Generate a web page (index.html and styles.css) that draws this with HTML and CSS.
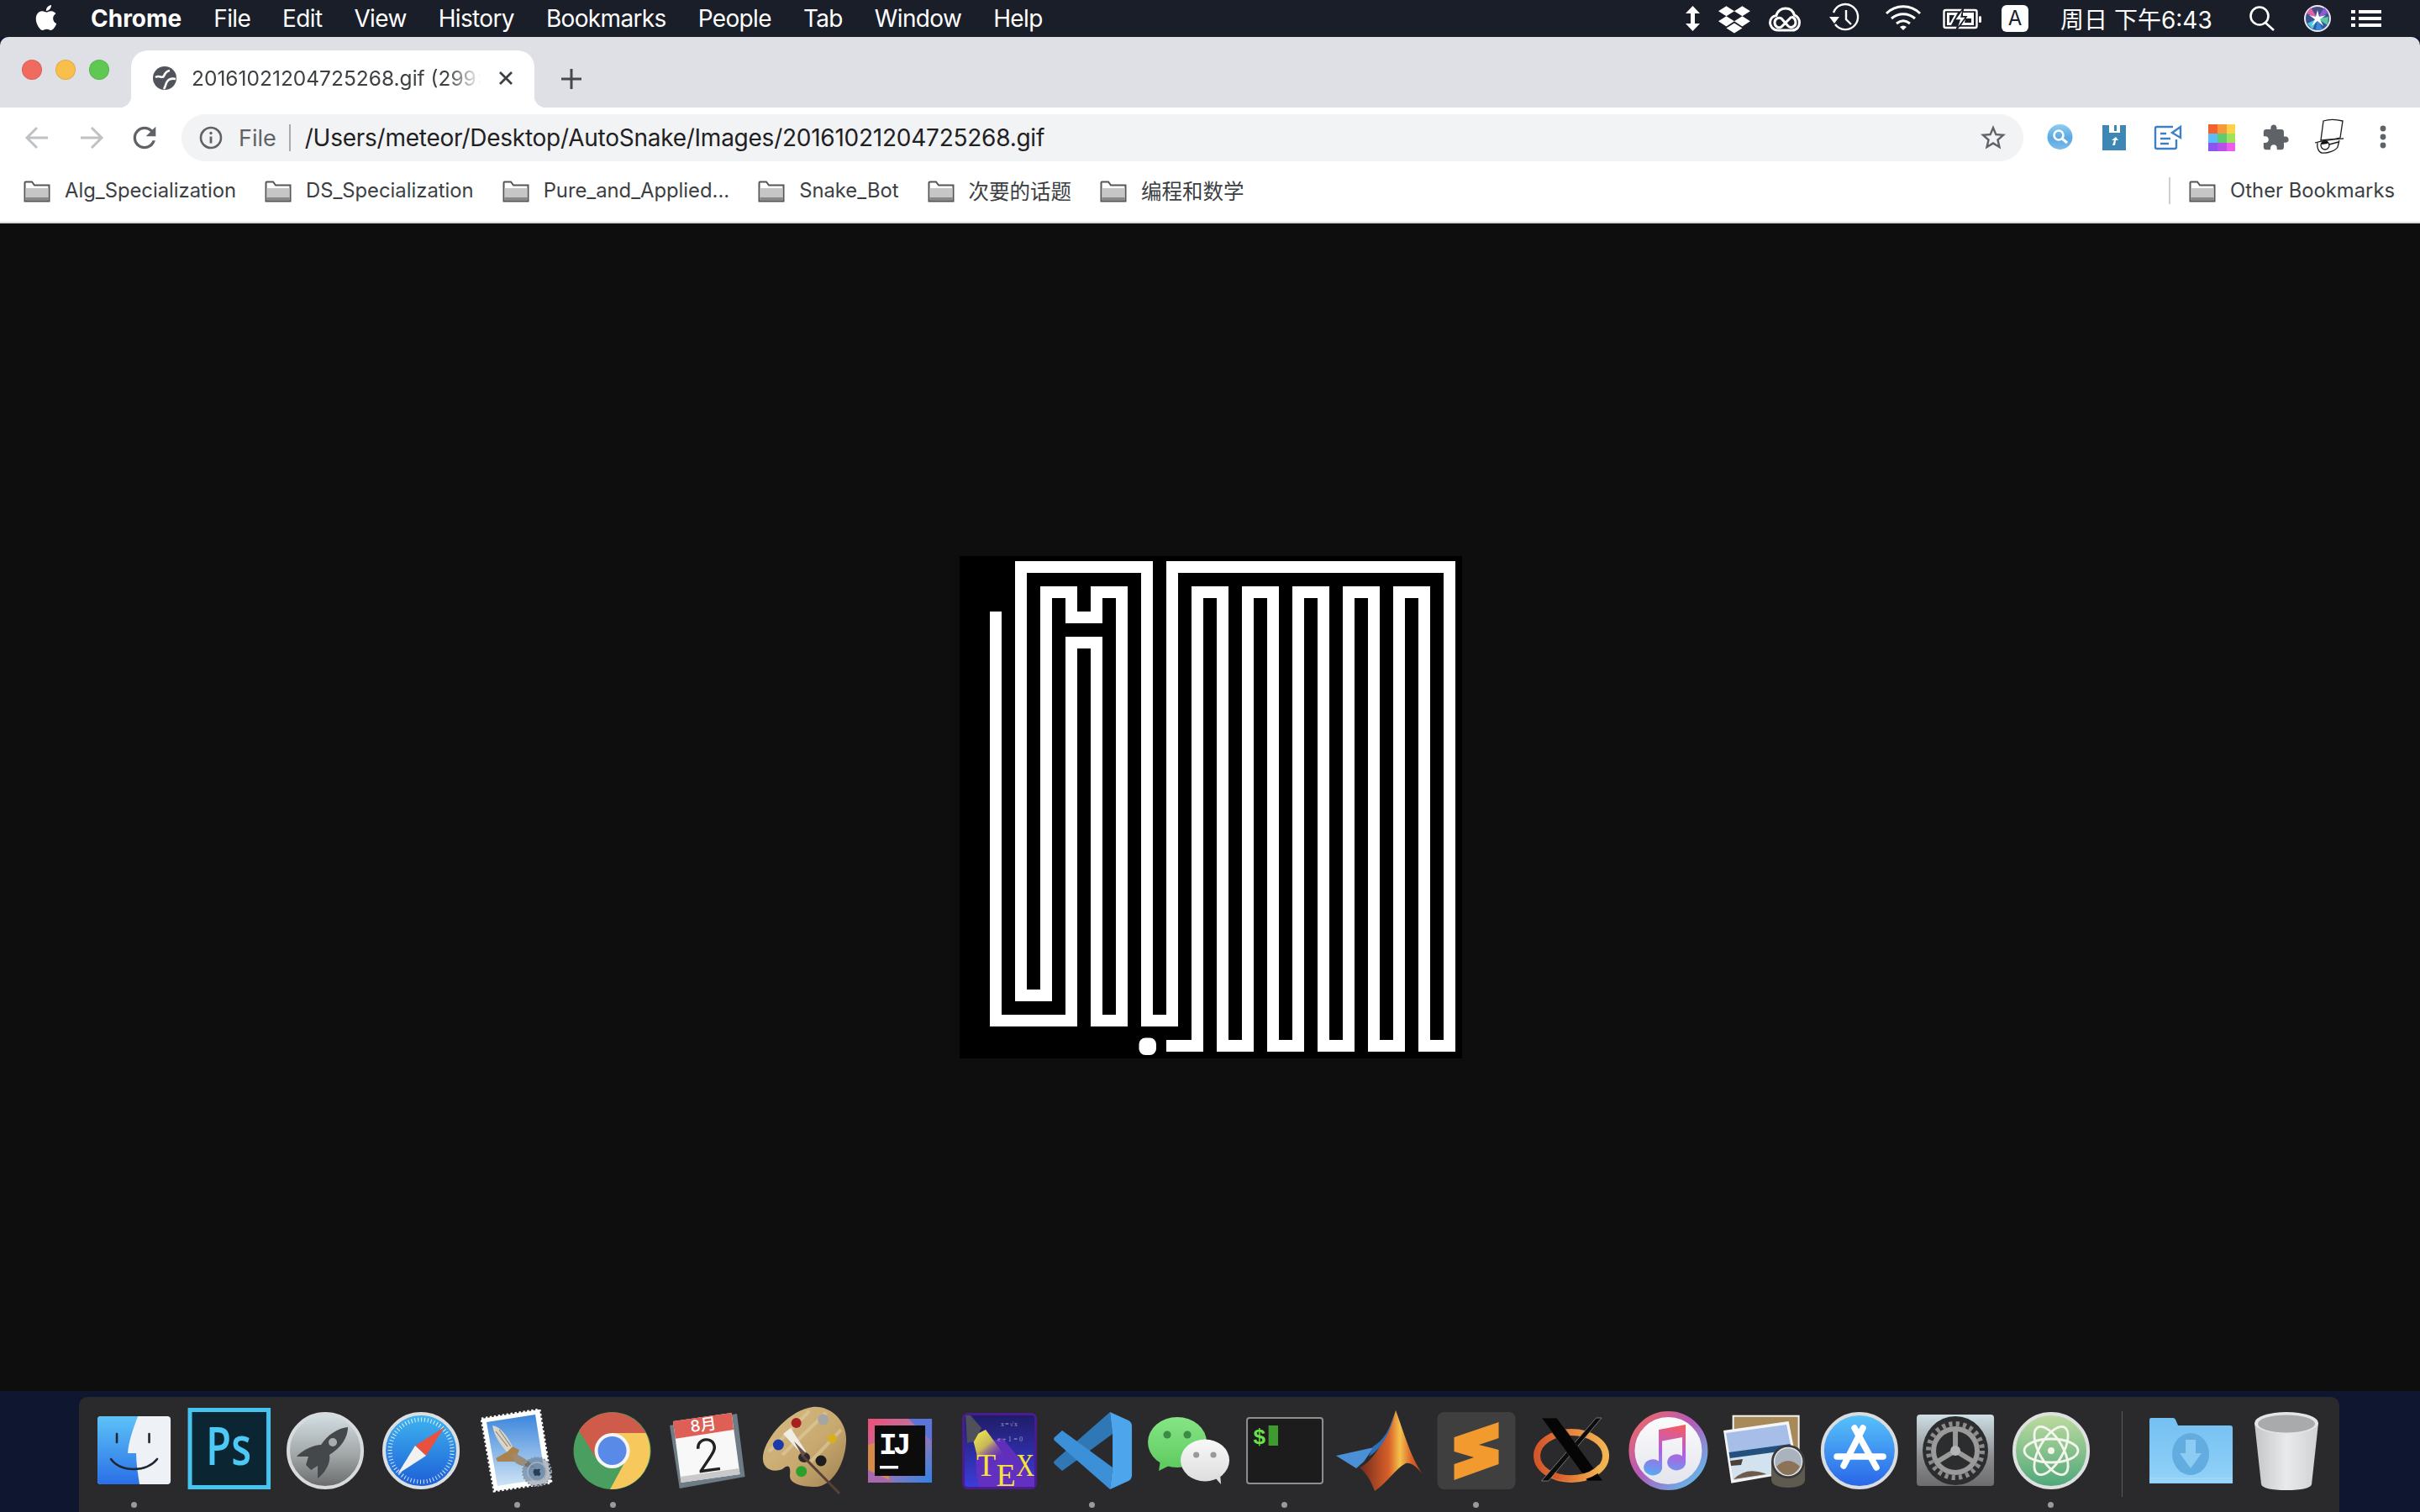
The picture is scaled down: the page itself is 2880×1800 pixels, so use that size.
FILE: index.html
```html
<!DOCTYPE html>
<html lang="en">
<head>
<meta charset="utf-8">
<title>20161021204725268.gif</title>
<link rel="stylesheet" href="styles.css">
</head>
<body>
<header class="menubar">
  <svg class="apple" width="30" height="32" viewBox="0 0 24 24"><path fill="#fff" d="M12.152 6.896c-.948 0-2.415-1.078-3.96-1.04-2.04.027-3.91 1.183-4.961 3.014-2.117 3.675-.546 9.103 1.519 12.09 1.013 1.454 2.208 3.09 3.792 3.039 1.52-.065 2.09-.987 3.935-.987 1.831 0 2.35.987 3.96.948 1.637-.026 2.676-1.48 3.676-2.948 1.156-1.688 1.636-3.325 1.662-3.415-.039-.013-3.182-1.221-3.22-4.857-.026-3.04 2.48-4.494 2.597-4.559-1.429-2.09-3.623-2.324-4.39-2.376-2-.156-3.675 1.09-4.61 1.09zM15.53 3.83c.843-1.012 1.4-2.427 1.245-3.83-1.207.052-2.662.805-3.532 1.818-.78.896-1.454 2.338-1.273 3.714 1.338.104 2.715-.688 3.559-1.701"/></svg>
  <nav class="menus">
    <span class="menu app">Chrome</span><span class="menu">File</span><span class="menu">Edit</span><span class="menu">View</span><span class="menu">History</span><span class="menu">Bookmarks</span><span class="menu">People</span><span class="menu">Tab</span><span class="menu">Window</span><span class="menu">Help</span>
  </nav>
  <div class="status">
    <svg width="40" height="44" viewBox="2000 0 40 44"><path fill="#fff" d="M2014.5 7 L2023 16 H2017 V28 H2023 L2014.5 37 L2006 28 H2012 V16 H2006Z"/></svg>
    <svg width="60" height="44" viewBox="2040 0 60 44"><g transform="translate(2045 4.4) scale(1.58)"><path fill="#fff" d="M6 1.807L0 5.629l6 3.822 6.001-3.822L6 1.807zM18 1.807l-6 3.822 6 3.822 6-3.822-6-3.822zM0 13.274l6 3.822 6.001-3.822L6 9.452l-6 3.822zM18 9.452l-6 3.822 6 3.822 6-3.822-6-3.822zM6 18.371l6.001 3.822 6-3.822-6-3.822L6 18.371z"/></g></svg>
    <svg width="65" height="44" viewBox="2100 0 65 44"><g fill="none" stroke="#fff" stroke-width="3"><path d="M2115 36 H2116 C2109 36 2106.5 30 2106.5 27 C2106.5 22 2110 19 2114 18.5 C2115 13 2120 10 2125 10 C2131 10 2134 13 2135.5 18 C2139 19 2141.5 23 2141.5 27 C2141.5 32 2138 36 2133 36 H2115Z"/><path d="M2132 20 L2120 32 C2117 34 2112 32 2112 27 C2112 22 2117 20 2120 22 L2128 31 C2131 34 2137 32 2137 27 C2137 24 2135 21 2132 20"/></g></svg>
    <svg width="70" height="44" viewBox="2165 0 70 44"><g fill="none" stroke="#fff" stroke-width="2.4"><path d="M2182 15 A15 15 0 1 1 2184 29"/><path d="M2197 12 V23 L2203 29"/></g><path fill="#fff" d="M2177 20 H2189 L2183 28Z"/></svg>
    <svg width="70" height="44" viewBox="2235 0 70 44"><g fill="none" stroke="#fff" stroke-width="3"><path d="M2245 16 C2256 5 2274 5 2285 16"/><path d="M2251 22 C2259 15 2271 15 2279 22"/><path d="M2257 28 C2262 24 2268 24 2273 28"/></g><path fill="#fff" d="M2261 32 Q2265 29 2269 32 L2265 36Z"/></svg>
    <svg width="70" height="44" viewBox="2305 0 70 44"><g fill="none" stroke="#fff" stroke-width="2.4"><rect x="2313.5" y="12" width="39" height="21" rx="2"/></g><rect x="2355" y="19" width="3" height="8" rx="1.5" fill="#fff"/><path fill="#fff" d="M2317 15 H2330 L2322 30 H2317Z M2336 15 H2349 V30 H2334 L2341 19 H2336Z"/><path fill="#1a1e28" d="M2320 18 H2326 L2321 27 H2320Z M2339 22 H2346 V27 H2338Z"/><path fill="#fff" d="M2337 9 L2326 24 H2332 L2328 36 L2340 20 H2334Z" stroke="#1a1e28" stroke-width="1.5"/></svg>
    <div class="ime">A</div>
    <span class="clock">周日 下午6:43</span>
    <svg width="70" height="44" viewBox="2670 0 70 44"><g fill="none" stroke="#fff" stroke-width="2.6"><circle cx="2689" cy="19" r="10.5"/><path d="M2696 27 L2706 36"/></g></svg>
    <svg width="50" height="44" viewBox="2740 0 50 44"><defs><linearGradient id="siri" x1="0" y1="0" x2="0" y2="1"><stop offset="0" stop-color="#4a4a7c"/><stop offset="1" stop-color="#2a5ea8"/></linearGradient></defs><circle cx="2758" cy="22" r="15" fill="url(#siri)" stroke="#e8e8ee" stroke-width="2"/><path d="M2758 22 L2750 9 L2745 16Z" fill="#e060a8"/><path d="M2758 22 L2766 9 L2771 15Z" fill="#8a5ad8"/><path d="M2758 22 L2771 20 L2770 30Z" fill="#5cc8a0"/><path d="M2758 22 L2746 28 L2752 35Z" fill="#4cc8e0"/><path d="M2758 22 L2764 35 L2756 36Z" fill="#3a88d8"/><path d="M2758 12 L2760 20 L2768 18 L2761 23 L2765 31 L2758 25 L2751 31 L2755 23 L2748 18 L2756 20Z" fill="#fff"/></svg>
    <svg width="60" height="44" viewBox="2790 0 60 44"><path fill="#fff" d="M2798 12 h5 v4 h-5z M2807 12 h27 v4 h-27z M2798 20 h5 v4 h-5z M2807 20 h27 v4 h-27z M2798 28 h5 v4 h-5z M2807 28 h27 v4 h-27z"/></svg>
  </div>
</header>

<section class="tabstrip">
  <div class="lights"><i class="light red"></i><i class="light yellow"></i><i class="light green"></i></div>
  <div class="tab">
    <svg class="favicon" width="28" height="28" viewBox="0 0 28 28"><circle cx="14" cy="14" r="14" fill="#50535a"/><g fill="none" stroke="#fff" stroke-width="2.6"><path d="M3 13 C8 10 11 15 13 11.500 C14.500 8.500 15 6 20 5"/><path d="M27 15 C22 14 19 15 17 18 C15 20.500 15.500 23.500 13 27"/></g></svg>
    <span class="tab-title">20161021204725268.gif (299×299 pixels)</span>
    <svg class="tab-close" width="20" height="20" viewBox="0 0 20 20"><path d="M3 3 L17 17 M17 3 L3 17" stroke="#3c4043" stroke-width="2.8"/></svg>
  </div>
  <svg class="newtab" width="26" height="26" viewBox="0 0 26 26"><path d="M13 1 V25 M1 13 H25" stroke="#45484f" stroke-width="3"/></svg>
</section>

<section class="toolbar">
  <svg class="navbtn" width="30" height="30" viewBox="0 0 30 30"><path d="M28 15 H4 M15 3 L3 15 L15 27" fill="none" stroke="#bfc1c3" stroke-width="3"/></svg>
  <svg class="navbtn fwd" width="30" height="30" viewBox="0 0 30 30"><path d="M2 15 H26 M15 3 L27 15 L15 27" fill="none" stroke="#bfc1c3" stroke-width="3"/></svg>
  <svg class="navbtn reload" width="40" height="40" viewBox="0 0 24 24"><path fill="#5f6368" d="M17.65 6.35C16.2 4.9 14.21 4 12 4c-4.42 0-7.99 3.58-7.99 8s3.57 8 7.99 8c3.73 0 6.84-2.55 7.73-6h-2.08c-.82 2.33-3.04 4-5.65 4-3.31 0-6-2.69-6-6s2.69-6 6-6c1.66 0 3.14.69 4.22 1.78L13 11h7V4l-2.35 2.35z"/></svg>
  <div class="omnibox">
    <svg class="info" width="28" height="28" viewBox="0 0 28 28"><circle cx="14" cy="14" r="12" fill="none" stroke="#5f6368" stroke-width="2.6"/><path d="M14 12.5 V20.5" stroke="#5f6368" stroke-width="2.8"/><circle cx="14" cy="8.5" r="1.7" fill="#5f6368"/></svg>
    <span class="scheme">File</span>
    <i class="omni-sep"></i>
    <span class="url">/Users/meteor/Desktop/AutoSnake/Images/20161021204725268.gif</span>
    <svg class="star" width="36" height="36" viewBox="0 0 24 24"><path fill="#5f6368" d="M22 9.24l-7.19-.62L12 2 9.19 8.63 2 9.24l5.46 4.73L5.82 21 12 17.27 18.18 21l-1.63-7.03L22 9.24zM12 15.4l-3.76 2.27 1-4.28-3.32-2.88 4.38-.38L12 6.1l1.71 4.04 4.38.38-3.32 2.88 1 4.28L12 15.4z"/></svg>
  </div>
  <div class="extensions">
    <svg width="62" height="56" viewBox="2420 136 62 56"><defs><linearGradient id="ex1" x1="0" y1="0" x2="0" y2="1"><stop offset="0" stop-color="#8fcdf2"/><stop offset=".55" stop-color="#5ba8e4"/><stop offset="1" stop-color="#7dbde8"/></linearGradient></defs><circle cx="2451.5" cy="163" r="15" fill="url(#ex1)"/><g fill="none" stroke="#fff"><circle cx="2450" cy="161" r="5.5" stroke-width="2.6"/><path d="M2454 165 L2460 170" stroke-width="3"/></g></svg>
    <svg width="64" height="56" viewBox="2482 136 64 56"><path fill="#3e86b4" d="M2502 149 H2510 V158 H2523 V149 H2530 V179 H2502Z"/><rect x="2516" y="149" width="3" height="7" fill="#3e86b4"/><path d="M2514 173 L2516 167 H2513 L2518 163 L2521 167 H2518 L2517 173Z" fill="#fff"/></svg>
    <svg width="64" height="56" viewBox="2546 136 64 56"><g fill="none" stroke="#3f7fc4" stroke-width="2.4"><path d="M2586 151 H2567 Q2565 151 2565 153 V175 Q2565 177 2567 177 H2588 Q2590 177 2590 175 V166"/><path d="M2571 159 H2578 M2571 165 H2583 M2571 171 H2581"/><path d="M2595 151 L2585 158 L2595 164Z"/></g></svg>
    <svg width="64" height="56" viewBox="2610 136 64 56"><path fill="#f2622e" d="M2628 148h11v11h-11z"/><path fill="#f5993a" d="M2639 148h11v11h-11z"/><path fill="#fbd24a" d="M2650 148h10v11h-10z"/><path fill="#5cbcf8" d="M2628 159h11v11h-11z"/><path fill="#5dcc70" d="M2639 159h11v11h-11z"/><path fill="#9de35e" d="M2650 159h10v11h-10z"/><path fill="#8a56f0" d="M2628 170h11v10h-11z"/><path fill="#b84fe8" d="M2639 170h11v10h-11z"/><path fill="#ee5cee" d="M2650 170h10v10h-10z"/></svg>
    <svg width="64" height="56" viewBox="2674 136 64 56"><g transform="translate(2691 147) scale(1.42)"><path fill="#5f6368" d="M20.5 11H19V7c0-1.1-.9-2-2-2h-4V3.5C13 2.12 11.88 1 10.5 1S8 2.12 8 3.5V5H4c-1.1 0-1.99.9-1.99 2v3.8H3.5c1.49 0 2.7 1.21 2.7 2.7s-1.21 2.7-2.7 2.7H2V20c0 1.1.9 2 2 2h3.8v-1.5c0-1.49 1.21-2.7 2.7-2.7 1.49 0 2.7 1.21 2.7 2.7V22H17c1.1 0 2-.9 2-2v-4h1.5c1.38 0 2.5-1.12 2.5-2.5S21.88 11 20.5 11z"/></g></svg>
    <svg width="72" height="56" viewBox="2738 136 72 56"><g fill="none" stroke="#1b1b1b" stroke-width="1.300"><path d="M2765 144 C2771 142 2780 142 2788 144 L2785 164 C2778 166 2768 166 2762 167 Z"/><path d="M2755 170 C2765 167 2778 166 2789 165"/><path d="M2758 170 C2757 175 2759 181 2763 182 C2770 183 2780 179 2782 175 L2784 167"/><circle cx="2767" cy="173" r="5"/><path d="M2772 172 L2783 169"/></g><path d="M2763 169 L2770 168 L2770 171 L2763 172Z" fill="#111"/></svg>
    <svg class="kebab" width="40" height="56" viewBox="2810 136 40 56"><g fill="#5f6368"><circle cx="2836" cy="153" r="3.4"/><circle cx="2836" cy="163" r="3.4"/><circle cx="2836" cy="173" r="3.4"/></g></svg>
  </div>
</section>

<section class="bookmarks">
  <div class="bm"><svg class="folder" width="32" height="26" viewBox="0 0 32 26"><path d="M1.5 24.5 V2.5 Q1.5 1.5 2.5 1.5 H10 L13 5.5 H30.5 V24.5Z" fill="#fff" stroke="#555" stroke-width="2"/><path d="M2.5 9 H29.5 V20 H2.5Z" fill="#c6c6c6"/><path d="M2.5 20 H29.5 V24 H2.5Z" fill="#888"/></svg><span>Alg_Specialization</span></div>
  <div class="bm"><svg class="folder" width="32" height="26" viewBox="0 0 32 26"><path d="M1.5 24.5 V2.5 Q1.5 1.5 2.5 1.5 H10 L13 5.5 H30.5 V24.5Z" fill="#fff" stroke="#555" stroke-width="2"/><path d="M2.5 9 H29.5 V20 H2.5Z" fill="#c6c6c6"/><path d="M2.5 20 H29.5 V24 H2.5Z" fill="#888"/></svg><span>DS_Specialization</span></div>
  <div class="bm"><svg class="folder" width="32" height="26" viewBox="0 0 32 26"><path d="M1.5 24.5 V2.5 Q1.5 1.5 2.5 1.5 H10 L13 5.5 H30.5 V24.5Z" fill="#fff" stroke="#555" stroke-width="2"/><path d="M2.5 9 H29.5 V20 H2.5Z" fill="#c6c6c6"/><path d="M2.5 20 H29.5 V24 H2.5Z" fill="#888"/></svg><span>Pure_and_Applied...</span></div>
  <div class="bm"><svg class="folder" width="32" height="26" viewBox="0 0 32 26"><path d="M1.5 24.5 V2.5 Q1.5 1.5 2.5 1.5 H10 L13 5.5 H30.5 V24.5Z" fill="#fff" stroke="#555" stroke-width="2"/><path d="M2.5 9 H29.5 V20 H2.5Z" fill="#c6c6c6"/><path d="M2.5 20 H29.5 V24 H2.5Z" fill="#888"/></svg><span>Snake_Bot</span></div>
  <div class="bm"><svg class="folder" width="32" height="26" viewBox="0 0 32 26"><path d="M1.5 24.5 V2.5 Q1.5 1.5 2.5 1.5 H10 L13 5.5 H30.5 V24.5Z" fill="#fff" stroke="#555" stroke-width="2"/><path d="M2.5 9 H29.5 V20 H2.5Z" fill="#c6c6c6"/><path d="M2.5 20 H29.5 V24 H2.5Z" fill="#888"/></svg><span class="cjk">次要的话题</span></div>
  <div class="bm"><svg class="folder" width="32" height="26" viewBox="0 0 32 26"><path d="M1.5 24.5 V2.5 Q1.5 1.5 2.5 1.5 H10 L13 5.5 H30.5 V24.5Z" fill="#fff" stroke="#555" stroke-width="2"/><path d="M2.5 9 H29.5 V20 H2.5Z" fill="#c6c6c6"/><path d="M2.5 20 H29.5 V24 H2.5Z" fill="#888"/></svg><span class="cjk">编程和数学</span></div>
  <div class="bm other"><i class="bm-sep"></i><svg class="folder" width="32" height="26" viewBox="0 0 32 26"><path d="M1.5 24.5 V2.5 Q1.5 1.5 2.5 1.5 H10 L13 5.5 H30.5 V24.5Z" fill="#fff" stroke="#555" stroke-width="2"/><path d="M2.5 9 H29.5 V20 H2.5Z" fill="#c6c6c6"/><path d="M2.5 20 H29.5 V24 H2.5Z" fill="#888"/></svg><span>Other Bookmarks</span></div>
</section>

<main class="viewer">
  <svg class="gif" width="598" height="598" viewBox="0 0 598 598">
    <rect width="598" height="598" fill="#000"/>
    <polyline fill="none" stroke="#fff" stroke-width="14" stroke-linecap="square" stroke-linejoin="miter" points="43,73 43,553 133,553 133,103 163,103 163,553 193,553 193,43 163,43 163,73 133,73 133,43 103,43 103,523 73,523 73,13 223,13 223,553 253,553 253,13 583,13 583,583 553,583 553,43 523,43 523,583 493,583 493,43 463,43 463,583 433,583 433,43 403,43 403,583 373,583 373,43 343,43 343,583 313,583 313,43 283,43 283,583 253,583"/>
    <rect x="213.500" y="573.500" width="20.500" height="20.500" rx="7.500" fill="#fff"/>
  </svg>
</main>

<footer class="desktop">
  <div class="dock">
    <!-- Finder -->
    <div class="app-slot"><svg class="ico" viewBox="0 0 114 112"><defs><linearGradient id="fi" x1="0" y1="0" x2="0" y2="1"><stop offset="0" stop-color="#5cc3f7"/><stop offset="1" stop-color="#2a6fe6"/></linearGradient></defs><rect x="14" y="16" width="87" height="81" rx="4" fill="#eef1f5"/><path d="M18 16 H62 C56 32 51 46 50 60 H60 C60 72 62 85 64 97 H18 Q14 97 14 93 V20 Q14 16 18 16Z" fill="url(#fi)"/><path d="M37 37 V47 M75.500 37 V47" stroke="#1d2733" stroke-width="2.600" stroke-linecap="round"/><path d="M30 67 C42 83 72 83 85 67" fill="none" stroke="#1d2733" stroke-width="2.600" stroke-linecap="round"/></svg><i class="dot"></i></div>
    <!-- Photoshop -->
    <div class="app-slot"><svg class="ico" viewBox="0 0 114 112"><rect x="10" y="8.500" width="93.500" height="92" fill="#0b2533" stroke="#45c4f0" stroke-width="5"/><text class="ps" x="29" y="74" textLength="54" lengthAdjust="spacingAndGlyphs">Ps</text></svg><i class="dot off"></i></div>
    <!-- Launchpad -->
    <div class="app-slot"><svg class="ico" viewBox="0 0 114 112"><defs><linearGradient id="lp" x1="0" y1="0" x2="0" y2="1"><stop offset="0" stop-color="#d4e0e5"/><stop offset=".55" stop-color="#a2a7a8"/><stop offset="1" stop-color="#68696b"/></linearGradient></defs><circle cx="57" cy="57" r="44" fill="url(#lp)" stroke="#d8dbdd" stroke-width="4"/><path d="M84 29 C72 30 60 38 52 50 C44 50 30 56 23 64 L37 64 L34 74 L40 80 L48 75 L48 90 C56 84 64 72 62 62 C75 54 84 42 84 29Z" fill="#45484a"/><circle cx="66" cy="47" r="5" fill="#a8adae"/></svg><i class="dot off"></i></div>
    <!-- Safari -->
    <div class="app-slot"><svg class="ico" viewBox="0 0 114 112"><defs><linearGradient id="sa" x1="0" y1="0" x2="0" y2="1"><stop offset="0" stop-color="#3fb6f0"/><stop offset="1" stop-color="#1c5cd6"/></linearGradient></defs><circle cx="57" cy="57" r="44" fill="url(#sa)" stroke="#dcdfe2" stroke-width="4"/><circle cx="57" cy="57" r="37" fill="none" stroke="#fff" stroke-width="5" stroke-dasharray="1 2.870" opacity=".85"/><path d="M85 29 L50 51 L63 63Z" fill="#e9513f"/><path d="M29 85 L50 51 L63 63Z" fill="#f2f2f2"/></svg><i class="dot off"></i></div>
    <!-- Mail -->
    <div class="app-slot"><svg class="ico" viewBox="0 0 114 112"><defs><linearGradient id="ma" x1="0" y1="0" x2="0" y2="1"><stop offset="0" stop-color="#3c86dc"/><stop offset="1" stop-color="#cfe4f5"/></linearGradient></defs><path d="M15 19 L84 8 L98 95 L30 105Z" fill="#fff" stroke="#fff" stroke-width="3" stroke-dasharray="2.500 2.500"/><path d="M21 23 L79 14 L91 90 L34 99Z" fill="url(#ma)"/><path d="M28 27 C38 28 46 40 54 56 L46 60 C38 50 30 40 28 27Z" fill="#d9d5c8"/><path d="M32 34 L46 52 M36 32 L50 52" stroke="#8f8a7c" stroke-width="1.200"/><path d="M52 52 L60 56 L54 70 L34 70 L32 66 L46 58Z" fill="#a8834f"/><path d="M52 60 C62 62 72 70 80 78 C70 76 60 76 54 70Z" fill="#9a8c78"/><circle cx="81" cy="82" r="17" fill="#2f3f55" fill-opacity=".35" stroke="#8c97a3" stroke-width="2" stroke-dasharray="2 2"/><circle cx="81" cy="82" r="11" fill="#6f8aa8" fill-opacity=".7" stroke="#a8b2bd" stroke-width="1.500"/><g transform="translate(75.500 76) scale(.46)"><path fill="#2c3e55" d="M12.152 6.896c-.948 0-2.415-1.078-3.96-1.04-2.04.027-3.91 1.183-4.961 3.014-2.117 3.675-.546 9.103 1.519 12.09 1.013 1.454 2.208 3.09 3.792 3.039 1.52-.065 2.09-.987 3.935-.987 1.831 0 2.35.987 3.96.948 1.637-.026 2.676-1.48 3.676-2.948 1.156-1.688 1.636-3.325 1.662-3.415-.039-.013-3.182-1.221-3.22-4.857-.026-3.04 2.48-4.494 2.597-4.559-1.429-2.09-3.623-2.324-4.39-2.376-2-.156-3.675 1.09-4.61 1.09z"/></g></svg><i class="dot"></i></div>
    <!-- Chrome -->
    <div class="app-slot"><svg class="ico" viewBox="0 0 114 112"><circle cx="56.500" cy="57" r="46" fill="#4a9f60"/><path d="M96.500 36 L57 36 L74 66 L54 103 A46 46 0 0 0 96.500 36Z" fill="#f7c95c"/><path d="M17 33 L38.500 68 L57 36 L96.500 36 A46 46 0 0 0 17 33Z" fill="#cf5b4b"/><circle cx="56.500" cy="57" r="21" fill="#f5f5f5"/><circle cx="56.500" cy="57" r="17" fill="#5a8ae8"/></svg><i class="dot"></i></div>
    <!-- Calendar -->
    <div class="app-slot"><svg class="ico" viewBox="0 0 114 112"><path d="M10 27 L90 13 L99.500 88 L21.700 102Z" fill="#6e7d85"/><path d="M14 22 L83.500 12 L93.500 85 L23.500 95Z" fill="#f8f8f8"/><path d="M22.500 88 L92.500 78 L93.500 85 L23.500 95Z" fill="#c9c9c9"/><path d="M14 22 L83.500 12 L86 32 L16.700 42.700Z" fill="#de5f55"/><text class="cal-m" x="50" y="33" transform="rotate(-8 50 27)">8月</text><text class="cal-d" x="55" y="82" transform="rotate(-8 55 62)">2</text></svg><i class="dot off"></i></div>
    <!-- Palette -->
    <div class="app-slot"><svg class="ico" viewBox="0 0 114 112"><defs><linearGradient id="pa" x1="0" y1="0" x2="1" y2="1"><stop offset="0" stop-color="#d7bd86"/><stop offset=".55" stop-color="#c8a970"/><stop offset="1" stop-color="#a08250"/></linearGradient></defs><path d="M7 63 C10 40 40 8 66 5 C88 3 106 22 106 43 C106 70 90 100 69 100 C52 100 38 96 39 86 C40 76 38 72 30 79 C18 84 5 78 7 63Z" fill="url(#pa)"/><path d="M14 58 L62 10 M30 62 L82 12 M64 70 L100 32" stroke="#e2cd9f" stroke-width="4" opacity=".6"/><ellipse cx="56" cy="65" rx="7" ry="6" fill="#2a2a2c"/><path d="M53 62 L98 108" stroke="#5a4038" stroke-width="3"/><path d="M31 37 L40 30 L58 58 L54 62Z" fill="#f0ede5"/><path d="M44 46 L58 60 L54 64Z" fill="#6a5048"/><circle cx="46.600" cy="24" r="6" fill="#a81f1f"/><circle cx="78.700" cy="20" r="6.500" fill="#a5a5a5"/><circle cx="89.300" cy="42.700" r="5.500" fill="#d8b01f"/><circle cx="76" cy="69" r="6.500" fill="#1d1d1d"/><circle cx="52.700" cy="81.700" r="6.500" fill="#2ba02b"/><circle cx="25.300" cy="50" r="6.500" fill="#1c3aa8"/></svg><i class="dot off"></i></div>
    <!-- IntelliJ -->
    <div class="app-slot"><svg class="ico" viewBox="0 0 114 112"><defs><linearGradient id="ij" x1="0" y1="0" x2="1" y2="1"><stop offset="0" stop-color="#ee4f78"/><stop offset=".4" stop-color="#c070a0"/><stop offset="1" stop-color="#2e83e8"/></linearGradient></defs><rect x="18" y="19" width="76" height="76" fill="url(#ij)"/><path d="M18 50 L36 44 L44 95 H18Z" fill="#d68a4a"/><path d="M18 80 L50 95 H18Z" fill="#a868b0"/><path d="M66 19 H94 V46Z" fill="#5c74d8"/><rect x="26" y="27" width="60" height="60" fill="#0c0c0d"/><text class="ij" x="31" y="61">IJ</text><rect x="32" y="75" width="22" height="3.500" fill="#fff"/></svg><i class="dot off"></i></div>
    <!-- TeXShop -->
    <div class="app-slot"><svg class="ico" viewBox="0 0 114 112"><defs><linearGradient id="tx" x1="0" y1="0" x2="0" y2="1"><stop offset="0" stop-color="#1e1c66"/><stop offset="1" stop-color="#3d3ddc"/></linearGradient><linearGradient id="txb" x1="0" y1="0" x2="1" y2="1"><stop offset="0" stop-color="#f6f04e"/><stop offset=".5" stop-color="#c8b858"/><stop offset="1" stop-color="#6a2fbf" stop-opacity="0"/></linearGradient></defs><rect x="17.500" y="13.500" width="86" height="88" rx="5" fill="url(#tx)" stroke="#4b1c8f" stroke-width="3"/><path d="M34 50 L64 42 L102 88 L102 100 L36 100 Q30 80 34 50Z" fill="#6a2fbf" opacity=".85"/><path d="M28 40 L44 32 L66 62 L34 64Z" fill="url(#txb)"/><path d="M20 15 L26 15 L39 30 L30 46 L22 48Z" fill="#50505a"/><text class="tx-f" x="62" y="28" textLength="20">x=√x</text><text class="tx-f" x="58" y="46" textLength="30">e+1=0</text><text class="tx-t" x="33" y="87">T</text><text class="tx-t" x="56.500" y="99">E</text><text class="tx-t" x="80" y="87" textLength="22" lengthAdjust="spacingAndGlyphs">X</text></svg><i class="dot off"></i></div>
    <!-- VS Code -->
    <div class="app-slot"><svg class="ico" viewBox="0 0 114 112"><path d="M78 11 L81 37 L21 81 L12 73 Q10 71 12 69Z" fill="#2f78b5"/><path d="M78 103 L81 77 L21 33 L12 41 Q10 43 12 45Z" fill="#3c90d8"/><path d="M78 11 L100 21 Q104 23 104 28 V86 Q104 91 100 93 L78 103 L81 77 V37Z" fill="#4da6ec"/></svg><i class="dot"></i></div>
    <!-- WeChat -->
    <div class="app-slot"><svg class="ico" viewBox="0 0 114 112"><defs><linearGradient id="wc" x1="0" y1="0" x2="0" y2="1"><stop offset="0" stop-color="#86e586"/><stop offset="1" stop-color="#5fcb60"/></linearGradient><linearGradient id="wd" x1="0" y1="0" x2="0" y2="1"><stop offset="0" stop-color="#f8f8f8"/><stop offset="1" stop-color="#dedede"/></linearGradient></defs><ellipse cx="44" cy="47" rx="35" ry="30" fill="url(#wc)"/><path d="M24 68 L22 81 L36 74Z" fill="#5fcb60"/><circle cx="32" cy="38" r="4.600" fill="#3d8a46"/><circle cx="56" cy="38" r="4.600" fill="#3d8a46"/><ellipse cx="77" cy="68.500" rx="29" ry="25" fill="url(#wd)"/><path d="M88 88 L96 97 L95 84Z" fill="#dedede"/><circle cx="66.600" cy="62" r="3.600" fill="#999"/><circle cx="87" cy="62" r="3.600" fill="#999"/></svg><i class="dot off"></i></div>
    <!-- Terminal -->
    <div class="app-slot"><svg class="ico" viewBox="0 0 114 112"><rect x="13" y="18" width="90" height="78" rx="3" fill="#1c1c1d" stroke="#8f8f8f" stroke-width="2"/><rect x="38.600" y="27" width="11.400" height="24" fill="#3f9b2f"/><text class="term" x="20" y="49">$</text></svg><i class="dot"></i></div>
    <!-- MATLAB -->
    <div class="app-slot"><svg class="ico" viewBox="0 0 114 112"><defs><linearGradient id="ml" x1="0" y1="0" x2="1" y2="0"><stop offset="0" stop-color="#6f2a1c"/><stop offset=".45" stop-color="#d9602a"/><stop offset=".62" stop-color="#f4c24c"/><stop offset=".8" stop-color="#d9602a"/><stop offset="1" stop-color="#a53a25"/></linearGradient></defs><path d="M5 63 L29 78 L38 70 L50 53 Z" fill="#4b8fd6"/><path d="M76 9 C84 30 95 70 110.600 88 C104 80 96 70 88 72 C76 78 66 95 51 105 C46 92 42 85 33 77 C50 70 66 40 76 9Z" fill="url(#ml)"/><path d="M76 9 C70 32 60 46 49 52 L44 64 C58 56 70 36 76 9Z" fill="#2f6fb5"/></svg><i class="dot off"></i></div>
    <!-- Sublime -->
    <div class="app-slot"><svg class="ico" viewBox="0 0 114 112"><rect x="11.500" y="11" width="93" height="92" rx="8" fill="#3f3f40"/><path d="M84.500 23 V42 L61 50 L84.500 56 V73 L31.500 92 V73 L55 65 L31.500 58 V41Z" fill="#f29a2e"/></svg><i class="dot"></i></div>
    <!-- X11 -->
    <div class="app-slot"><svg class="ico" viewBox="0 0 114 112"><defs><linearGradient id="xr" x1="0" y1="0" x2="1" y2="0"><stop offset="0" stop-color="#d4562a"/><stop offset=".55" stop-color="#e88a3c"/><stop offset="1" stop-color="#f2b552"/></linearGradient></defs><ellipse cx="57" cy="63" rx="41" ry="28" fill="none" stroke="url(#xr)" stroke-width="8"/><path d="M93 18 H86.500 L21.500 93 H29.800Z" fill="#0c0c0c" stroke="#8a8a8a" stroke-width=".8"/><path d="M21.500 18 H39.800 L94.800 93 H76.500Z" fill="#050505" stroke="#333" stroke-width=".6"/><path d="M36 86 C50 92 78 92 92 76" fill="none" stroke="url(#xr)" stroke-width="7"/></svg><i class="dot off"></i></div>
    <!-- iTunes -->
    <div class="app-slot"><svg class="ico" viewBox="0 0 114 112"><defs><linearGradient id="itr" x1="0" y1="0" x2="1" y2="1"><stop offset="0" stop-color="#f56a5c"/><stop offset=".45" stop-color="#b45ab8"/><stop offset="1" stop-color="#55c8f5"/></linearGradient><linearGradient id="itf" x1="0" y1="0" x2="0" y2="1"><stop offset="0" stop-color="#fdfdfd"/><stop offset="1" stop-color="#e2e3ec"/></linearGradient><linearGradient id="itn" gradientUnits="userSpaceOnUse" x1="60" y1="26" x2="50" y2="88"><stop offset="0" stop-color="#f55a62"/><stop offset=".5" stop-color="#b25ee0"/><stop offset="1" stop-color="#5aa8f0"/></linearGradient></defs><circle cx="57.400" cy="57" r="43.500" fill="url(#itf)" stroke="url(#itr)" stroke-width="7"/><path d="M46 32 L78 26 V72 A11 9.500 0 1 1 74 63.500 V41 L50 45.500 V78 A11 9.500 0 1 1 46 69.500Z" fill="url(#itn)"/></svg><i class="dot off"></i></div>
    <!-- Preview -->
    <div class="app-slot"><svg class="ico" viewBox="0 0 114 112"><rect x="20.600" y="15.700" width="78" height="60" fill="#a88a5a" stroke="#f3f3f3" stroke-width="2"/><path d="M9 33 L86.600 22 L98.300 81.700 L18.300 95.700Z" fill="#f5f5f5"/><path d="M12 36 L84 26 L95 80 L21 92Z" fill="#a7bfe8"/><path d="M15.500 59 L88.500 49 L90 58 L17 68Z" fill="#23507c"/><path d="M17 66 L90 56 L95 80 L21 92Z" fill="#d2e2ee"/><path d="M17 69 L32 67 L30 74 L18 75Z" fill="#4a4038"/><path d="M21 91 Q36 76 58 84 L60 85Z" fill="#6e5a48"/><path d="M66 70 V92 C66 104 106 104 106 92 V70Z" fill="#5f5a50"/><ellipse cx="86" cy="70" rx="20" ry="20" fill="#3a3a3a"/><ellipse cx="86" cy="70" rx="16.500" ry="16.500" fill="#aab2bd" stroke="#e3e3e3" stroke-width="1.500"/><path d="M72 76 Q86 62 100 76 Q94 86 86 86 Q78 86 72 76Z" fill="#8c7358"/></svg><i class="dot off"></i></div>
    <!-- App Store -->
    <div class="app-slot"><svg class="ico" viewBox="0 0 114 112"><defs><linearGradient id="as" x1="0" y1="0" x2="0" y2="1"><stop offset="0" stop-color="#58c4fa"/><stop offset="1" stop-color="#2864e8"/></linearGradient></defs><circle cx="56.800" cy="57" r="44" fill="url(#as)" stroke="#dadde0" stroke-width="4"/><g stroke="#fff" stroke-linecap="round" stroke-width="7.500" fill="none"><path d="M61 30 L38 75"/><path d="M51 30 L77 77"/><path d="M30 64 H85"/></g></svg><i class="dot off"></i></div>
    <!-- System Preferences -->
    <div class="app-slot"><svg class="ico" viewBox="0 0 114 112"><defs><linearGradient id="sp" x1="0" y1="0" x2="0" y2="1"><stop offset="0" stop-color="#cfdfe6"/><stop offset=".6" stop-color="#8b8d8f"/><stop offset="1" stop-color="#6c6c6e"/></linearGradient></defs><rect x="11" y="14" width="92" height="85" rx="4" fill="url(#sp)"/><ellipse cx="57" cy="57" rx="39" ry="41" fill="#2c2d2f"/><circle cx="57" cy="57" r="32" fill="none" stroke="#8c8c8c" stroke-width="6" stroke-dasharray="4.200 4.200"/><circle cx="57" cy="57" r="26" fill="none" stroke="#9a9a9a" stroke-width="6"/><g stroke="#9a9a9a" stroke-width="6"><path d="M57 57 L57 30"/><path d="M57 57 L34 71"/><path d="M57 57 L80 71"/></g><circle cx="57" cy="57" r="6" fill="#b5b5b5"/></svg><i class="dot off"></i></div>
    <!-- Atom -->
    <div class="app-slot"><svg class="ico" viewBox="0 0 114 112"><defs><linearGradient id="at" x1="0" y1="0" x2="0" y2="1"><stop offset="0" stop-color="#bfdc9f"/><stop offset="1" stop-color="#4ea77a"/></linearGradient></defs><circle cx="57" cy="57" r="44" fill="url(#at)" stroke="#dfe1e0" stroke-width="4"/><g fill="none" stroke="#f4f6ee" stroke-width="2.800"><ellipse cx="57" cy="57" rx="32" ry="14"/><ellipse cx="57" cy="57" rx="32" ry="14" transform="rotate(60 57 57)"/><ellipse cx="57" cy="57" rx="32" ry="14" transform="rotate(-60 57 57)"/></g><circle cx="57" cy="57" r="4" fill="#f4f6ee"/></svg><i class="dot"></i></div>
    <i class="dock-sep"></i>
    <!-- Downloads -->
    <div class="app-slot"><svg class="ico" viewBox="0 0 114 112"><defs><linearGradient id="dl" x1="0" y1="0" x2="0" y2="1"><stop offset="0" stop-color="#74c0f2"/><stop offset="1" stop-color="#92d2f8"/></linearGradient></defs><path d="M8 20 Q8 18 10 18 H36 Q38 18 39 20 L42 27 H104 Q107 27 107 30 V96 H8Z" fill="url(#dl)"/><path d="M8 90 H107 M8 93 H107" stroke="#a8dcfa" stroke-width="1"/><ellipse cx="57" cy="61" rx="22" ry="25" fill="#62ace0"/><path d="M51 44 H63 V60 H70 L57 78 L44 60 H51Z" fill="#8ccbf2"/></svg><i class="dot off"></i></div>
    <!-- Trash -->
    <div class="app-slot"><svg class="ico" viewBox="0 0 114 112"><defs><linearGradient id="tr" x1="0" y1="0" x2="1" y2="0"><stop offset="0" stop-color="#c4c5c7"/><stop offset=".5" stop-color="#e9eaeb"/><stop offset="1" stop-color="#d0d1d2"/></linearGradient></defs><path d="M19 24 L27 97 Q29 104 57 104 Q85 104 87 97 L95 24Z" fill="url(#tr)"/><ellipse cx="57" cy="24" rx="38" ry="13" fill="#e4e5e6"/><ellipse cx="57" cy="25" rx="34" ry="10.500" fill="#a9aaac"/></svg><i class="dot off"></i></div>
  </div>
</footer>
</body>
</html>
```

FILE: styles.css
```css
* { box-sizing: border-box; }
html, body { margin: 0; height: 100%; }
body {
  width: 2880px;
  height: 1800px;
  display: flex;
  flex-direction: column;
  overflow: hidden;
  background: #0f1630;
  font-family: Inter, "Noto Sans CJK SC", sans-serif;
}
svg { display: block; flex: none; }

/* menu bar */
.menubar {
  height: 44px;
  flex: none;
  display: flex;
  align-items: center;
  background: #1a1e28;
  color: #fff;
  font-size: 28px;
  padding-left: 40px;
}
.apple { margin-top: -3px; }
.menus { display: flex; margin-left: 38px; letter-spacing: -0.65px; }
.menu { margin-right: 38px; }
.menu.app { font-weight: 700; letter-spacing: 0; }
.status { margin-left: auto; display: flex; align-items: center; padding-right: 30px; }
.ime {
  width: 32px; height: 32px; margin: 0 38px 0 7px;
  background: #fff; color: #1a1e28; border-radius: 6px;
  font-size: 24px; text-align: center; line-height: 32px;
}
.clock { width: 218px; white-space: nowrap; }

/* tab strip */
.tabstrip {
  height: 84px;
  flex: none;
  display: flex;
  background: #dfe0e5;
  border-radius: 10px 10px 0 0;
  padding-top: 16px;
  position: relative;
}
.lights { display: flex; gap: 16px; padding: 11px 0 0 26px; width: 156px; }
.light { width: 24px; height: 24px; border-radius: 50%; border: 1px solid rgba(0,0,0,.1); }
.red { background: #f16a60; }
.yellow { background: #f8bf4b; }
.green { background: #5fc852; }
.tab {
  width: 480px;
  height: 68px;
  background: #fff;
  border-radius: 20px 20px 0 0;
  display: flex;
  align-items: center;
  padding: 0 24px 2px 26px;
  position: relative;
}
.tab::before, .tab::after {
  content: "";
  position: absolute;
  bottom: 0;
  width: 14px;
  height: 14px;
}
.tab::before { left: -14px; background: radial-gradient(circle at 0 0, #dfe0e5 14px, #fff 14.5px); }
.tab::after { right: -14px; background: radial-gradient(circle at 100% 0, #dfe0e5 14px, #fff 14.5px); }
.favicon { margin-right: 18px; }
.tab-title {
  width: 351px;
  white-space: nowrap;
  overflow: hidden;
  font-size: 24.5px;
  color: #3c4043;
  -webkit-mask-image: linear-gradient(to right, #000 88%, transparent 100%);
  mask-image: linear-gradient(to right, #000 88%, transparent 100%);
}
.tab-close { margin-left: 19px; }
.newtab { margin: 21px 0 0 31px; }

/* toolbar */
.toolbar {
  height: 64px;
  flex: none;
  display: flex;
  align-items: flex-start;
  background: #fff;
  padding-top: 8px;
}
.navbtn { margin: 13px 0 0 29px; }
.navbtn.fwd { margin-left: 35px; }
.navbtn.reload { margin: 8px 0 0 28px; }
.omnibox {
  margin-left: 24px;
  width: 2192px;
  height: 56px;
  background: #f1f3f4;
  border-radius: 28px;
  display: flex;
  align-items: center;
  padding-left: 21px;
}
.scheme { margin-left: 19px; font-size: 27px; color: #5f6368; }
.omni-sep { width: 2px; height: 32px; margin: 0 17px 0 15px; background: #a8a9ab; }
.url { font-size: 28px; color: #1f2023; letter-spacing: -0.25px; white-space: nowrap; flex: 1; }
.star { margin-right: 18px; }
.extensions { display: flex; margin-left: 12px; }

/* bookmarks */
.bookmarks {
  height: 74px;
  flex: none;
  display: flex;
  align-items: center;
  background: #fff;
  border-bottom: 2px solid #dadce0;
  padding: 0 0 3px 28px;
  font-size: 23.8px;
  color: #3c4043;
}
.bm { display: flex; align-items: center; gap: 17px; margin-right: 34px; white-space: nowrap; }
.bm .cjk { font-size: 24.5px; }
.bm.other { margin: 0 30px 0 auto; }
.bm-sep { width: 2px; height: 32px; background: #cfcfcf; margin-right: 5px; }
.folder { margin-top: 2px; }

/* image viewer */
.viewer {
  height: 1390px;
  flex: none;
  display: flex;
  align-items: center;
  justify-content: center;
  padding-left: 2px;
  background: #0e0e0e;
}

/* dock */
.desktop { flex: 1; display: flex; align-items: flex-end; }
.dock {
  margin-left: 94px;
  width: 2690px;
  height: 137px;
  background: #2a2a2c;
  border-radius: 10px 10px 0 0;
  padding: 7px 6px 0 8px;
  display: flex;
  align-items: flex-start;
}
.app-slot { width: 114.1px; display: flex; flex-direction: column; align-items: center; }
.ico { width: 114.1px; height: 112px; }
.dot { width: 7px; height: 7px; margin-top: 6px; border-radius: 50%; background: #9a9a9c; }
.dot.off { visibility: hidden; }
.dock-sep { width: 1px; height: 102px; margin: 10px 24px 0 27px; background: #5a5a5c; flex: none; }

/* text inside dock icons */
.ps { font: 600 64px "Open Sans", sans-serif; fill: #4dc9f5; }
.cal-m { font: 500 19px Inter, "Noto Sans CJK SC", sans-serif; fill: #fff; text-anchor: middle; }
.cal-d { font: 300 54px Inter, sans-serif; fill: #222; text-anchor: middle; }
.ij { font: 700 36px "Liberation Mono", monospace; fill: #fff; letter-spacing: -5px; }
.tx-f { font: 8px "Liberation Serif", serif; fill: #9aa0c8; }
.tx-t { font: 400 38px "Liberation Serif", serif; fill: #f6e23c; }
.term { font: 700 26px "Liberation Mono", monospace; fill: #6ce04c; }
```
